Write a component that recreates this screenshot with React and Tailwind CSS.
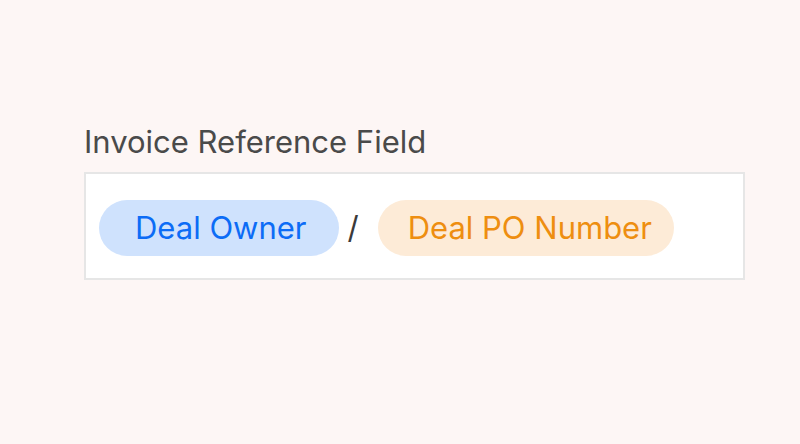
export default function App() {
  return (
    <div className="flex h-[444px] w-[800px] flex-col bg-[#fdf6f5] pl-[84px] pt-[120px] font-['Inter',sans-serif]">
      <p className="text-[31px] leading-[44px] text-[#4a4a4a]">Invoice Reference Field</p>
      <div className="mt-[8px] flex h-[108px] w-[661px] items-center border-2 border-[#e6e6e6] bg-white pl-[13px] pt-[4px]">
        <span className="flex h-[56px] items-center rounded-full bg-[#cfe2fd] pl-[36px] pr-[32px] text-[31px] text-[#0c6cf6]">
          Deal Owner
        </span>
        <span className="ml-[9px] mr-[19px] text-[31px] text-[#3a3a3a]">/</span>
        <span className="flex h-[56px] items-center rounded-full bg-[#fdebd7] pl-[30px] pr-[22px] text-[31px] text-[#ee8e10]">
          Deal PO Number
        </span>
      </div>
    </div>
  );
}
